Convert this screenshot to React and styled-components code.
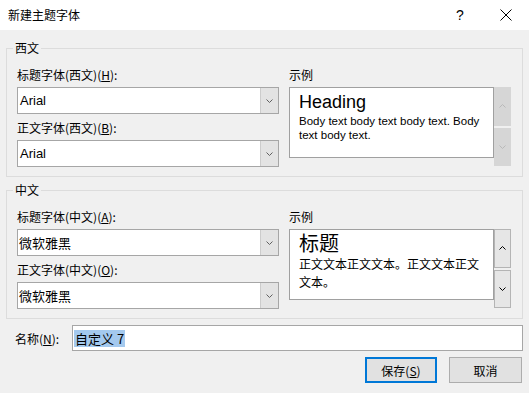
import React from 'react'
import styled, { createGlobalStyle } from 'styled-components'

const GlobalStyle = createGlobalStyle`
  html, body {
    margin: 0;
    padding: 0;
    background: #f0f0f0;
    overflow: hidden;
  }
  body {
    font-family: "Noto Sans CJK SC", "Noto Sans", sans-serif;
    font-size: 12px;
    color: #000;
  }
`

const Window = styled.div`
  width: 529px;
  height: 393px;
  background: #f0f0f0;
  display: flex;
  flex-direction: column;
`

const TitleBar = styled.div`
  height: 30px;
  background: #fff;
  display: flex;
  align-items: center;
  padding-left: 8px;
  flex-shrink: 0;
`

const Title = styled.div`
  flex: 1;
  font-size: 12px;
  line-height: 30px;
`

const CaptionButton = styled.div`
  width: 46px;
  height: 30px;
  display: flex;
  align-items: center;
  justify-content: center;
  font-family: "Liberation Sans", Arial, sans-serif;
  font-size: 14px;
  color: #000;
`

const Body = styled.div`
  padding: 10px 6px 0 6px;
  display: flex;
  flex-direction: column;
`

const Group = styled.fieldset`
  margin: ${(p) => (p.$first ? '0' : '5px 0 0 0')};
  padding: 5px 11px 9px 10px;
  border: 1px solid #dcdcdc;
  min-width: 0;
  box-sizing: border-box;
`

const Legend = styled.legend`
  margin-left: -4px;
  padding: 0 2px;
  line-height: 16px;
  font-size: 12px;
`

const GroupGrid = styled.div`
  display: grid;
  grid-template-columns: 262px 222px;
  column-gap: 10px;
`

const Column = styled.div`
  display: flex;
  flex-direction: column;
`

const FieldLabel = styled.div`
  height: 26px;
  display: flex;
  align-items: center;
  font-size: 12px;
  white-space: nowrap;
`

const Combo = styled.div`
  height: 27px;
  box-sizing: border-box;
  border: 1px solid #a6a6a6;
  background: #fff;
  display: flex;
  align-items: stretch;
`

const ComboText = styled.div`
  flex: 1;
  display: flex;
  align-items: center;
  padding-left: ${(p) => (p.$cjk ? '1px' : '2px')};
  font-family: ${(p) =>
    p.$cjk
      ? '"Noto Sans CJK SC", sans-serif'
      : '"Liberation Sans", Arial, sans-serif'};
  font-size: 13px;
`

const DropButton = styled.div`
  width: 18px;
  box-sizing: border-box;
  background: #e3e3e3;
  border-left: 1px solid #cccccc;
  display: flex;
  align-items: center;
  justify-content: center;
`

const PreviewRow = styled.div`
  display: flex;
  align-items: flex-start;
`

const PreviewBox = styled.div`
  width: 205px;
  height: 71px;
  box-sizing: border-box;
  border: 1px solid #a0a0a0;
  background: #fff;
  padding: ${(p) => (p.$cjk ? '1px' : '4px')} 8px 0 9px;
  overflow: hidden;
`

const PreviewHeading = styled.div`
  font-family: ${(p) =>
    p.$cjk
      ? '"Noto Sans CJK SC", sans-serif'
      : '"Liberation Sans", Arial, sans-serif'};
  font-size: ${(p) => (p.$cjk ? '20px' : '18px')};
  line-height: ${(p) => (p.$cjk ? '24px' : '21px')};
  margin-bottom: ${(p) => (p.$cjk ? '0' : '1px')};
`

const PreviewBody = styled.div`
  font-family: ${(p) =>
    p.$cjk
      ? '"Noto Sans CJK SC", sans-serif'
      : '"Liberation Sans", Arial, sans-serif'};
  font-size: ${(p) => (p.$cjk ? '12px' : '11.5px')};
  line-height: ${(p) => (p.$cjk ? '18px' : '14px')};
`

const ScrollColumn = styled.div`
  width: 17px;
  height: 79px;
  display: flex;
  flex-direction: column;
  gap: 2px;
`

const ScrollButton = styled.div`
  flex: 1;
  box-sizing: border-box;
  background: ${(p) => (p.$disabled ? '#d6d6d6' : '#e6e6e6')};
  border: 1px solid ${(p) => (p.$disabled ? '#d6d6d6' : '#b4b4b4')};
  display: flex;
  align-items: center;
  justify-content: center;
`

const NameRow = styled.div`
  margin-top: 6px;
  display: flex;
  align-items: center;
  height: 26px;
`

const NameLabel = styled.div`
  width: 57px;
  padding-left: 9px;
  font-size: 12px;
  white-space: nowrap;
`

const NameInput = styled.div`
  flex: 1;
  height: 26px;
  box-sizing: border-box;
  border: 1px solid #a6a6a6;
  background: #fff;
  display: flex;
  align-items: center;
  padding-left: 1px;
  font-size: 13px;
`

const Selected = styled.span`
  background: #a4c9ee;
  padding: 0 1px;
  line-height: 17px;
`

const ButtonRow = styled.div`
  margin-top: 6px;
  display: flex;
  justify-content: flex-end;
  gap: 12px;
  padding-right: 1px;
`

const Button = styled.div`
  width: ${(p) => (p.$primary ? '72px' : '73px')};
  height: 26px;
  box-sizing: border-box;
  background: #e1e1e1;
  border: ${(p) => (p.$primary ? '2px solid #0078d7' : '1px solid #adadad')};
  display: flex;
  align-items: center;
  justify-content: center;
  font-size: 12px;
`

const Chevron = ({ up, color = '#606060' }) => (
  <svg width="7" height="4" viewBox="0 0 7 4">
    <polyline
      points={up ? '0.5,3.5 3.5,0.5 6.5,3.5' : '0.5,0.5 3.5,3.5 6.5,0.5'}
      fill="none"
      stroke={color}
      strokeWidth="1"
    />
  </svg>
)

const CloseIcon = () => (
  <svg width="12" height="12" viewBox="0 0 12 12">
    <path d="M0.5 0.5 L11.5 11.5 M11.5 0.5 L0.5 11.5" stroke="#000" strokeWidth="1" />
  </svg>
)

const FontCombo = ({ value, cjk }) => (
  <Combo>
    <ComboText $cjk={cjk}>{value}</ComboText>
    <DropButton>
      <Chevron />
    </DropButton>
  </Combo>
)

const FontGroup = ({ first, legend, fields, heading, body, cjk, scrollDisabled }) => (
  <Group $first={first}>
    <Legend>{legend}</Legend>
    <GroupGrid>
      <Column>
        {fields.map((f) => (
          <React.Fragment key={f.key}>
            <FieldLabel>
              {f.label}(<u>{f.key}</u>):
            </FieldLabel>
            <FontCombo value={f.value} cjk={cjk} />
          </React.Fragment>
        ))}
      </Column>
      <Column>
        <FieldLabel>示例</FieldLabel>
        <PreviewRow>
          <PreviewBox $cjk={cjk}>
            <PreviewHeading $cjk={cjk}>{heading}</PreviewHeading>
            <PreviewBody $cjk={cjk}>{body}</PreviewBody>
          </PreviewBox>
          <ScrollColumn>
            <ScrollButton $disabled={scrollDisabled}>
              <Chevron up color={scrollDisabled ? '#b9b9b9' : '#000'} />
            </ScrollButton>
            <ScrollButton $disabled={scrollDisabled}>
              <Chevron color={scrollDisabled ? '#b9b9b9' : '#000'} />
            </ScrollButton>
          </ScrollColumn>
        </PreviewRow>
      </Column>
    </GroupGrid>
  </Group>
)

const App = () => (
  <>
    <GlobalStyle />
    <Window>
      <TitleBar>
        <Title>新建主题字体</Title>
        <CaptionButton>?</CaptionButton>
        <CaptionButton>
          <CloseIcon />
        </CaptionButton>
      </TitleBar>
      <Body>
        <FontGroup
          first
          legend="西文"
          fields={[
            { key: 'H', label: '标题字体(西文)', value: 'Arial' },
            { key: 'B', label: '正文字体(西文)', value: 'Arial' },
          ]}
          heading="Heading"
          body="Body text body text body text. Body text body text."
          scrollDisabled
        />
        <FontGroup
          legend="中文"
          cjk
          fields={[
            { key: 'A', label: '标题字体(中文)', value: '微软雅黑' },
            { key: 'O', label: '正文字体(中文)', value: '微软雅黑' },
          ]}
          heading="标题"
          body="正文文本正文文本。正文文本正文文本。"
        />
        <NameRow>
          <NameLabel>
            名称(<u>N</u>):
          </NameLabel>
          <NameInput>
            <Selected>自定义 7</Selected>
          </NameInput>
        </NameRow>
        <ButtonRow>
          <Button $primary>
            保存(<u>S</u>)
          </Button>
          <Button>取消</Button>
        </ButtonRow>
      </Body>
    </Window>
  </>
)

export default App
